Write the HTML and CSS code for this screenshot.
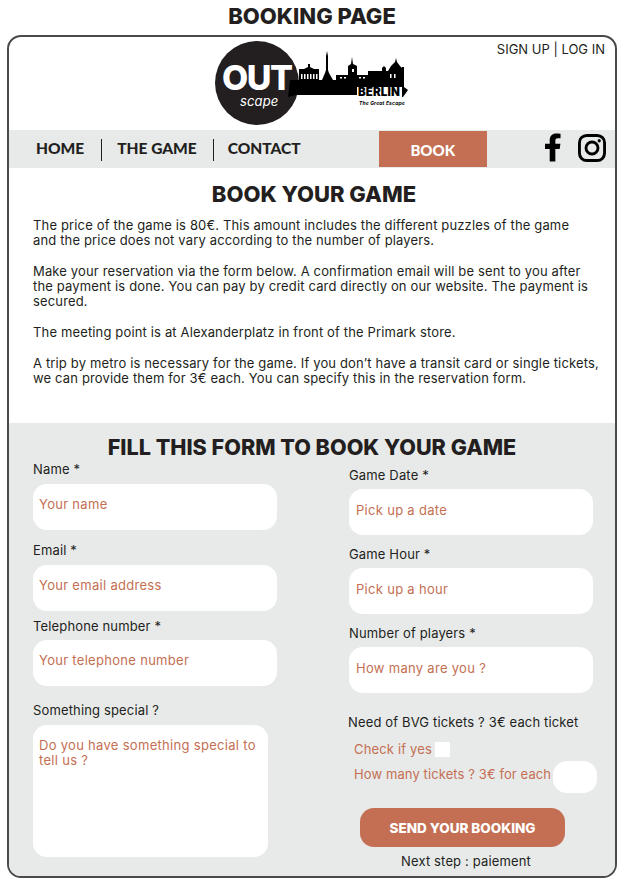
FILE: index.html
```html
<!DOCTYPE html>
<html lang="en">
<head>
  <meta charset="UTF-8">
  <meta name="viewport" content="width=device-width, initial-scale=1.0">
  <title>Booking Page</title>
  <link rel="stylesheet" href="styles.css">
</head>
<body>
  <h1 class="page-title">BOOKING PAGE</h1>
  <div class="frame">
    <header class="top">
      <div class="top-side"></div>
      <svg class="logo" viewBox="212 38 200 90" width="200" height="90">
        <circle cx="257" cy="83" r="42" fill="#231f20"/>
        <!-- skyline and key shaft -->
        <path fill="#000" d="M290 80H299V69H304L308 67V64H310V67L314 69H319V80H322L325 73L326 70V56L327 51L328 56V70L329 73L333 80H336V75H348V66L351 64L352 57L353 64L357 66V75H368V71H382V68L384 66L386 68V71H388L391 66L395 62L396 58L397 62L400 66L402 68V67L404 67V80L404 87L408 90L403 97H402V87H357V95H296L288 97Z"/>
        <g fill="#fff">
          <rect x="301" y="74" width="1.500" height="5"/>
          <rect x="304" y="74" width="1.500" height="5"/>
          <rect x="307" y="74" width="1.500" height="5"/>
          <rect x="310" y="74" width="1.500" height="5"/>
          <rect x="313" y="74" width="1.500" height="5"/>
          <rect x="316" y="74" width="1.500" height="5"/>
          <rect x="340" y="77" width="2" height="1.500"/>
          <rect x="344" y="77" width="2" height="1.500"/>
          <rect x="352" y="69" width="2" height="3"/>
          <rect x="359" y="77" width="2" height="1.500"/>
          <rect x="363" y="77" width="2" height="1.500"/>
          <rect x="390" y="74" width="1.500" height="4"/>
          <rect x="394" y="74" width="1.500" height="4"/>
        </g>
        <text class="logo-out" x="222" y="90">OUT</text>
        <text class="logo-scape" x="240" y="106">scape</text>
        <text class="logo-berlin" x="358" y="96">BERLIN</text>
        <text class="logo-tag" x="359" y="105">The Great Escape</text>
      </svg>
      <div class="top-side top-links">SIGN UP | LOG IN</div>
    </header>

    <nav class="nav">
      <a class="nav-link first" href="#">HOME</a>
      <a class="nav-link" href="#">THE GAME</a>
      <a class="nav-link last" href="#">CONTACT</a>
      <a class="nav-book" href="#">BOOK</a>
      <div class="social">
        <svg width="16" height="29" viewBox="0 0 17 30">
          <path fill="#000" d="M5 30V16.500H0V11H5V7C5 2.500 7.800 0 11.800 0C13.700 0 15.600 .2 16.500 .3V5.200H13.600C11.400 5.200 11 6.300 11 7.800V11H16.400L15.600 16.500H11V30Z"/>
        </svg>
        <svg width="28" height="28" viewBox="0 0 29 29">
          <rect x="1.500" y="1.500" width="26" height="26" rx="7.500" fill="none" stroke="#000" stroke-width="3"/>
          <circle cx="14.500" cy="14.500" r="6.200" fill="none" stroke="#000" stroke-width="3"/>
          <circle cx="22" cy="7" r="1.700" fill="#000"/>
        </svg>
      </div>
    </nav>

    <section class="intro">
      <h2>BOOK YOUR GAME</h2>
      <p>The price of the game is 80€. This amount includes the different puzzles of the game<br>and the price does not vary according to the number of players.</p>
      <p>Make your reservation via the form below. A confirmation email will be sent to you after the payment is done. You can pay by credit card directly on our website. The payment is secured.</p>
      <p>The meeting point is at Alexanderplatz in front of the Primark store.</p>
      <p>A trip by metro is necessary for the game. If you don’t have a transit card or single tickets, we can provide them for 3€ each. You can specify this in the reservation form.</p>
    </section>

    <section class="booking">
      <h2>FILL THIS FORM TO BOOK YOUR GAME</h2>
      <form class="booking-form">
        <div class="col col-left">
          <div class="field">
            <label for="name">Name *</label>
            <input type="text" id="name" placeholder="Your name">
          </div>
          <div class="field">
            <label for="email">Email *</label>
            <input type="text" id="email" placeholder="Your email address">
          </div>
          <div class="field">
            <label for="phone">Telephone number *</label>
            <input type="text" id="phone" placeholder="Your telephone number">
          </div>
          <div class="field">
            <label for="special">Something special ?</label>
            <textarea id="special" placeholder="Do you have something special to tell us ?"></textarea>
          </div>
        </div>

        <div class="col col-right">
          <div class="field">
            <label for="date">Game Date *</label>
            <input type="text" id="date" placeholder="Pick up a date">
          </div>
          <div class="field">
            <label for="hour">Game Hour *</label>
            <input type="text" id="hour" placeholder="Pick up a hour">
          </div>
          <div class="field">
            <label for="players">Number of players *</label>
            <input type="text" id="players" placeholder="How many are you ?">
          </div>
          <div class="tickets">
            <div class="tickets-title">Need of BVG tickets ? 3€ each ticket</div>
            <div class="check-row">
              <label for="need">Check if yes</label>
              <span class="checkbox" id="need"></span>
            </div>
            <div class="count-row">
              <label for="count">How many tickets ? 3€ for each</label>
              <input type="text" id="count">
            </div>
          </div>
          <button type="submit">SEND YOUR BOOKING</button>
          <div class="next-step">Next step : paiement</div>
        </div>
      </form>
    </section>
  </div>
</body>
</html>
```

FILE: styles.css
```css
* {
  margin: 0;
  padding: 0;
  box-sizing: border-box;
}
body {
  font-family: "Inter", "Open Sans", sans-serif;
  color: #231f20;
  background-color: #fff;
  padding: 0 6px 0 7px;
  font-size: 13px;
  line-height: 15px;
  letter-spacing: .15px;
}
.page-title {
  text-align: center;
  font-size: 22px;
  font-weight: 800;
  line-height: 24px;
  letter-spacing: 0;
  padding-top: 4px;
  height: 35px;
}
.frame {
  height: 843px;
  border: 2px solid #4a4a4a;
  border-radius: 14px;
  overflow: hidden;
}

/* header */
.top {
  display: grid;
  grid-template-columns: 1fr auto 1fr;
  height: 93px;
}
.logo {
  display: block;
  margin-top: 1px;
}
.top-links {
  text-align: right;
  padding: 5px 10px 0 0;
  font-size: 13px;
  letter-spacing: 0;
}
.logo-out {
  font-family: "Inter", sans-serif;
  font-size: 34px;
  font-weight: 800;
  letter-spacing: -1.500px;
  fill: #fff;
}
.logo-scape {
  font-family: "Inter", sans-serif;
  font-size: 13px;
  font-style: italic;
  fill: #fff;
}
.logo-berlin {
  font-family: "Inter", sans-serif;
  font-size: 11.500px;
  font-weight: 900;
  fill: #000;
}
.logo-tag {
  font-family: "Inter", sans-serif;
  font-size: 5px;
  font-weight: 700;
  font-style: italic;
  fill: #000;
}

/* nav */
.nav {
  display: flex;
  align-items: flex-start;
  height: 38px;
  background-color: #e8eaea;
}
.nav-link {
  font-family: "Lato", sans-serif;
  font-weight: 900;
  font-size: 15.500px;
  line-height: 18px;
  letter-spacing: 0;
  color: #231f20;
  text-decoration: none;
  margin-top: 9px;
  padding: 0 16px 4px 15px;
  border-right: 1px solid #231f20;
}
.nav-link.first {
  padding-left: 27px;
  padding-right: 17px;
}
.nav-link.last {
  border-right: none;
  padding-left: 14px;
  padding-right: 0;
  width: 165px;
}
.nav-book {
  width: 108px;
  height: 36px;
  margin-top: 1px;
  background-color: #c46f53;
  color: #fff;
  font-family: "Lato", sans-serif;
  font-weight: 900;
  font-size: 15px;
  line-height: 38px;
  letter-spacing: 0;
  text-align: center;
  text-decoration: none;
}
.social {
  display: flex;
  align-items: center;
  gap: 17px;
  margin: 3px 0 0 58px;
}

/* intro text */
.intro {
  height: 255px;
  padding: 0 12px 0 24px;
  background-color: #fff;
}
.intro h2 {
  text-align: center;
  font-size: 22px;
  font-weight: 800;
  line-height: 26px;
  letter-spacing: 0;
  padding: 13px 8px 11px 0;
  height: 50px;
}
.intro p {
  margin-bottom: 16px;
}

/* form */
.booking {
  height: 455px;
  background-color: #e8eaea;
}
.booking h2 {
  text-align: center;
  font-size: 21.600px;
  font-weight: 800;
  line-height: 24px;
  letter-spacing: 0;
  padding-top: 12px;
  height: 39px;
}
.booking-form {
  display: flex;
  padding-left: 24px;
}
.col-left {
  width: 316px;
  flex: none;
}
.col-right {
  width: 250px;
  flex: none;
  padding-top: 6px;
}
.field label {
  display: block;
  margin-bottom: 7px;
}
.col-right .field label {
  margin-bottom: 6px;
}
.col-right .field {
  margin-bottom: 12px;
}
.col-left .field:nth-child(1) {
  margin-bottom: 13px;
}
.col-left .field:nth-child(2) {
  margin-bottom: 8px;
}
.col-left .field:nth-child(3) {
  margin-bottom: 17px;
}
.col-left .field:nth-child(3) label {
  margin-bottom: 6px;
}
input,
textarea {
  display: block;
  border: none;
  border-radius: 14px;
  background-color: #fff;
  font-family: inherit;
  font-size: 13px;
  line-height: 15px;
  letter-spacing: .3px;
  padding: 0 6px;
  outline: none;
  resize: none;
}
input {
  width: 244px;
  height: 46px;
  padding-bottom: 5px;
}
.col-left input {
  padding-bottom: 7px;
}
.col-right input {
  padding-left: 7px;
}
textarea {
  width: 235px;
  height: 132px;
  padding-top: 13px;
}
input::placeholder,
textarea::placeholder {
  color: #c46f53;
  opacity: 1;
}
.tickets {
  padding-top: 10px;
}
.tickets-title {
  margin-left: -1px;
}
.check-row {
  display: flex;
  align-items: center;
  margin: 12px 0 0 5px;
  color: #c46f53;
}
.checkbox {
  width: 15px;
  height: 15px;
  background-color: #fff;
  margin-left: 3px;
}
.count-row {
  display: flex;
  align-items: center;
  margin: 4px 0 0 5px;
  color: #c46f53;
}
.count-row label {
  flex: none;
  white-space: nowrap;
  margin-bottom: 6px;
  letter-spacing: .1px;
}
.count-row input {
  width: 44px;
  height: 32px;
  margin-left: 2px;
  flex: none;
}
button {
  display: block;
  width: 205px;
  height: 39px;
  margin: 15px 0 0 11px;
  border: none;
  border-radius: 14px;
  background-color: #c46f53;
  color: #fff;
  font-family: inherit;
  font-size: 13.500px;
  font-weight: 800;
  cursor: pointer;
}
.next-step {
  width: 234px;
  text-align: center;
  margin-top: 7px;
}
```
